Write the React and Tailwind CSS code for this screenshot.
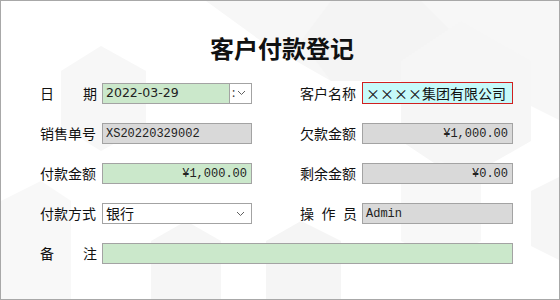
import React from "react";

const cjk = { fontFamily: '"Noto Sans CJK SC", "Noto Sans", sans-serif' };
const mono = { fontFamily: '"Liberation Mono", "Noto Sans CJK SC", monospace' };

function Chevron() {
  return (
    <svg width="9" height="6" viewBox="0 0 9 6" className="text-[#606060]">
      <path d="M1 1 L4.5 4.5 L8 1" fill="none" stroke="currentColor" strokeWidth="1" />
    </svg>
  );
}

function Label({ children, spread }) {
  return (
    <div
      className={`w-[62px] shrink-0 pr-[5px] text-[14px] text-[#111] flex ${
        spread ? "justify-between" : ""
      }`}
      style={cjk}
    >
      {children}
    </div>
  );
}

function Box({ tone = "gray", align = "left", font = mono, children, className = "" }) {
  const bg = tone === "green" ? "bg-[#cbe8cb]" : tone === "white" ? "bg-white" : "bg-[#d9d9d9]";
  return (
    <div
      className={`h-[21px] border border-[#a3a3a3] ${bg} flex items-center px-[3px] text-[12px] text-[#222] whitespace-nowrap ${
        align === "right" ? "justify-end pr-[4px]" : ""
      } ${className}`}
      style={font}
    >
      {children}
    </div>
  );
}

function Backdrop() {
  return (
    <svg className="absolute inset-0" width="560" height="300" viewBox="0 0 560 300">
      <polygon points="205,0 560,0 560,120 470,75 400,40 330,80 260,40" fill="#f7f7f7" />
      <polygon points="330,0 420,0 460,40 420,80 330,80 300,40" fill="#f4f4f4" />
      <polygon points="460,20 530,60 530,140 460,180 400,140 400,60" fill="#f6f6f6" />
      <polygon points="100,45 145,70 145,125 100,150 60,125 60,70" fill="#f7f7f7" />
      <polygon points="0,200 40,180 70,200 70,300 0,300" fill="#f8f8f8" />
      <polygon points="150,240 185,220 220,240 220,300 150,300" fill="#f6f6f6" />
      <polygon points="265,240 300,220 340,240 340,300 265,300" fill="#f5f5f5" />
      <polygon points="400,180 440,160 480,180 480,240 440,260 400,240" fill="#f8f8f8" />
      <polygon points="530,190 560,175 560,260 530,245" fill="#f6f6f6" />
    </svg>
  );
}

export default function App() {
  return (
    <div className="relative w-[560px] h-[300px] bg-white border border-[#a8a8a8] overflow-hidden">
      <Backdrop />
      <div className="relative">
        {/* 标题 */}
        <div
          className="pt-[31px] h-[81px] text-center text-[24px] font-bold leading-[32px] text-[#111] pl-[4px]"
          style={cjk}
        >
          客户付款登记
        </div>

        <div className="pl-[39px] flex flex-col gap-[19px]">
          {/* 第一行 */}
          <div className="flex items-center">
            <div className="flex items-center">
              <Label spread>
                <span>日</span>
                <span>期</span>
              </Label>
              <div className="w-[150px] h-[21px] border border-[#a3a3a3] flex">
                <div
                  className="w-[127px] bg-[#cbe8cb] border-r border-[#a3a3a3] flex items-center px-[3px] text-[#222]"
                  style={{ fontFamily: '"DejaVu Sans", sans-serif', fontSize: "12.5px" }}
                >
                  2022-03-29
                </div>
                <div className="flex-1 bg-white flex items-center pl-[2px] gap-[2px] text-[12px] text-[#333]">
                  <span className="leading-none">:</span>
                  <Chevron />
                </div>
              </div>
            </div>
            <div className="flex items-center ml-[48px]">
              <Label>客户名称</Label>
              <div
                className="w-[151px] h-[22px] border border-[#d02020] bg-[#c6fafa] flex items-center px-[3px] text-[14px] text-[#111] whitespace-nowrap"
                style={cjk}
              >
                ××××集团有限公司
              </div>
            </div>
          </div>

          {/* 第二行 */}
          <div className="flex items-center">
            <div className="flex items-center">
              <Label>销售单号</Label>
              <Box className="w-[150px]">XS20220329002</Box>
            </div>
            <div className="flex items-center ml-[48px]">
              <Label>欠款金额</Label>
              <Box className="w-[151px]" align="right">¥1,000.00</Box>
            </div>
          </div>

          {/* 第三行 */}
          <div className="flex items-center">
            <div className="flex items-center">
              <Label>付款金额</Label>
              <Box className="w-[150px]" tone="green" align="right">¥1,000.00</Box>
            </div>
            <div className="flex items-center ml-[48px]">
              <Label>剩余金额</Label>
              <Box className="w-[151px]" align="right">¥0.00</Box>
            </div>
          </div>

          {/* 第四行 */}
          <div className="flex items-center">
            <div className="flex items-center">
              <Label>付款方式</Label>
              <Box className="w-[150px] justify-between pr-[6px]" tone="white" font={cjk}>
                <span className="text-[14px] text-[#111]">银行</span>
                <Chevron />
              </Box>
            </div>
            <div className="flex items-center ml-[48px]">
              <Label spread>
                <span>操</span>
                <span>作</span>
                <span>员</span>
              </Label>
              <Box className="w-[151px]">Admin</Box>
            </div>
          </div>

          {/* 备注 */}
          <div className="flex items-center">
            <Label spread>
              <span>备</span>
              <span>注</span>
            </Label>
            <Box className="w-[411px]" tone="green"></Box>
          </div>
        </div>
      </div>
    </div>
  );
}
